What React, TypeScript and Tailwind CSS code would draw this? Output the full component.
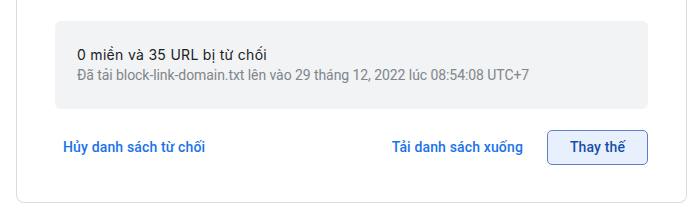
import React from "react";

export default function App() {
  return (
    <div className="w-[700px] h-[222px] bg-white overflow-hidden" style={{ fontFamily: "Roboto, 'Noto Sans', sans-serif" }}>
      <div className="ml-4 w-[671px] border-x border-b border-[#dadce0] rounded-b-lg pt-[21px] pb-[37px] px-[38px]">
        <div className="bg-[#f1f3f4] rounded-md h-[88px] px-[22px] flex flex-col justify-center">
          <div className="text-[14px] leading-5 text-[#202124] tracking-[0.3px] font-['Inter',sans-serif]">0 miền và 35 URL bị từ chối</div>
          <div className="text-[14px] leading-5 text-[#80868b] tracking-[-0.07px]">Đã tải block-link-domain.txt lên vào 29 tháng 12, 2022 lúc 08:54:08 UTC+7</div>
        </div>
        <div className="mt-[21px] flex items-center">
          <button className="px-2 h-[35px] text-[14px] font-medium tracking-[0.15px] text-[#1a73e8]">Hủy danh sách từ chối</button>
          <div className="flex-1" />
          <button className="px-2 h-[35px] text-[14px] font-medium tracking-[0.15px] text-[#1a73e8] mr-4">Tải danh sách xuống</button>
          <button className="w-[101px] h-[35px] rounded-[5px] border border-[#5f7fc7] bg-[#e8f0fe] text-[14px] font-medium tracking-[0.15px] text-[#174ea6]">Thay thế</button>
        </div>
      </div>
    </div>
  );
}
